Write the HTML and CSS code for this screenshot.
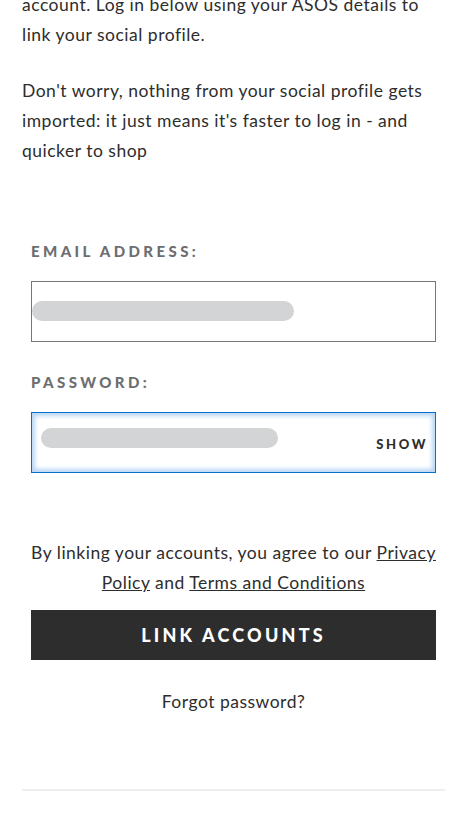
FILE: index.html
```html
<!DOCTYPE html>
<html lang="en">
<head>
    <meta charset="UTF-8">
    <meta name="viewport" content="width=device-width, initial-scale=1.0">
    <title>Link accounts</title>
    <link rel="stylesheet" href="styles.css">
</head>
<body>
    <div class="page">
        <div class="intro">
            <p>account. Log in below using your ASOS details to link your social profile.</p>
            <p>Don't worry, nothing from your social profile gets imported: it just means it's faster to log in - and quicker to shop</p>
        </div>

        <form class="link_form">
            <label class="field_label">Email address:</label>
            <div class="field">
                <span class="redacted redacted_email"></span>
            </div>

            <label class="field_label">Password:</label>
            <div class="field field_focus">
                <span class="redacted redacted_pass"></span>
                <a href="#none" class="show_btn">Show</a>
            </div>

            <p class="terms">By linking your accounts, you agree to our <a href="#none">Privacy Policy</a> and <a href="#none">Terms and Conditions</a></p>

            <button type="button" class="link_btn">Link accounts</button>

            <a href="#none" class="forgot">Forgot password?</a>
        </form>

        <hr class="divider">
    </div>
</body>
</html>
```

FILE: styles.css
```css
*{padding: 0;
margin: 0;
box-sizing: border-box;}
body{
    font-family: Lato, "Liberation Sans", sans-serif;
    color: #2d2d2d;
    background: #fff;
    overflow: hidden;
}
.page{
    padding: 0 22px;
}
.intro{
    margin-top: -10px;
}
.intro p{
    font-size: 17.5px;
    line-height: 30px;
    letter-spacing: 0.5px;
    margin-bottom: 26px;
}
.link_form{
    padding: 0 9px;
    margin-top: 75px;
    display: flex;
    flex-direction: column;
}
.field_label{
    display: block;
    font-size: 15px;
    line-height: 20px;
    font-weight: 900;
    letter-spacing: 3.4px;
    text-transform: uppercase;
    color: #6d6e70;
    margin-bottom: 20px;
}
.field{
    position: relative;
    height: 61px;
    border: 1px solid #767676;
    margin-bottom: 30px;
}
.field_focus{
    border-color: #0770cf;
    box-shadow: inset 0 0 4px 3px #b9d6f5;
}
.redacted{
    position: absolute;
    background: #d3d4d5;
    border-radius: 10px;
}
.redacted_email{
    left: 0;
    top: 19px;
    width: 262px;
    height: 20px;
}
.redacted_pass{
    left: 9px;
    top: 15px;
    width: 237px;
    height: 20px;
}
.show_btn{
    position: absolute;
    right: 7px;
    top: 23px;
    font-size: 13px;
    font-weight: 900;
    letter-spacing: 2.6px;
    text-transform: uppercase;
    color: #2d2d2d;
    text-decoration: none;
}
.terms{
    margin-top: 35px;
    margin-left: -9px;
    margin-right: -9px;
    text-align: center;
    font-size: 17.5px;
    line-height: 30px;
    letter-spacing: 0.5px;
    color: #2d2d2d;
}
.terms a{
    color: #2d2d2d;
}
.link_btn{
    margin-top: 12px;
    height: 50px;
    border: 0 none;
    background: #2d2d2d;
    color: #fff;
    font-family: inherit;
    font-size: 18px;
    font-weight: 900;
    letter-spacing: 3.2px;
    text-transform: uppercase;
}
.forgot{
    margin-top: 27px;
    align-self: center;
    font-size: 17.5px;
    line-height: 30px;
    letter-spacing: 0.5px;
    color: #2d2d2d;
    text-decoration: none;
}
.divider{
    margin-top: 72px;
    border: 0 none;
    height: 2px;
    background: #eeeeee;
}
```
